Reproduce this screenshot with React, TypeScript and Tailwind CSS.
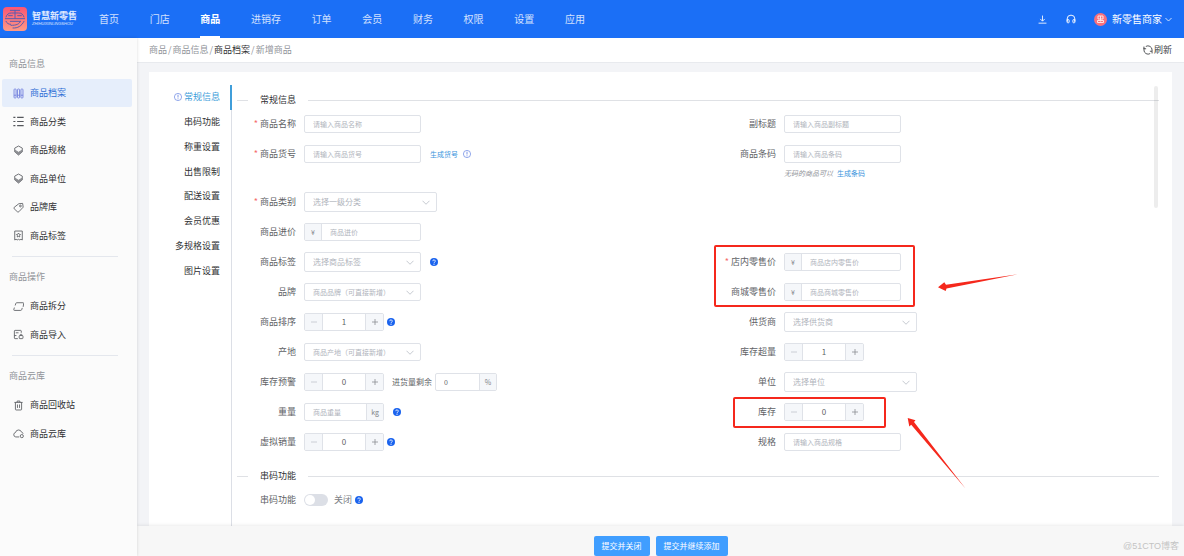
import { useState, type ReactNode } from "react";

const navItems = ["首页", "门店", "商品", "进销存", "订单", "会员", "财务", "权限", "设置", "应用"];

const tabs = ["常规信息", "串码功能", "称重设置", "出售限制", "配送设置", "会员优惠", "多规格设置", "图片设置"];

type IconName = "archive" | "list" | "layers" | "tag" | "badge" | "split" | "import" | "trash" | "cloud";

type MenuItem = { label: string; icon: IconName };

const goodsMenu: MenuItem[] = [
  { label: "商品档案", icon: "archive" },
  { label: "商品分类", icon: "list" },
  { label: "商品规格", icon: "layers" },
  { label: "商品单位", icon: "layers" },
  { label: "品牌库", icon: "tag" },
  { label: "商品标签", icon: "badge" },
];

const actionMenu: MenuItem[] = [
  { label: "商品拆分", icon: "split" },
  { label: "商品导入", icon: "import" },
];

const cloudMenu: MenuItem[] = [
  { label: "商品回收站", icon: "trash" },
  { label: "商品云库", icon: "cloud" },
];

const iconPaths: Record<IconName, ReactNode> = {
  archive: (
    <g stroke="#6a78dc">
      <rect x="1.5" y="1.500" width="3" height="13" rx="1" />
      <rect x="6.500" y="1.500" width="3" height="13" rx="1" />
      <rect x="11.500" y="1.500" width="3" height="13" rx="1" />
      <path d="M1.500 10.500h3M6.500 10.500h3M11.500 10.500h3" />
    </g>
  ),
  list: <path d="M0.500 2h3M6 2h9.500M0.500 8h3M6 8h9.500M0.500 14h3M6 14h9.500" strokeWidth="1.500" />,
  layers: (
    <>
      <path d="M8 1.500 13.500 4.500v5.500L8 14.500 2.500 10V4.500z" />
      <path d="M3 7.500 8 10.500l5-3V10l-5 4-5-4z" fill="#8a8c90" stroke="#8a8c90" />
    </>
  ),
  tag: (
    <>
      <path d="M8.500 2.500 14 2l.8 5.500-6.300 6.700a1.500 1.500 0 0 1-2.100 0L1.700 9.800a1.500 1.500 0 0 1 0-2z" />
      <circle cx="10.800" cy="5.800" r="1.300" />
    </>
  ),
  badge: (
    <>
      <path d="M2.500 1.500h11v13l-2-1-1.500 1-2-1-2 1-1.500-1-2 1z" />
      <path d="m8 4.500 1 1.700 2 .4-1.400 1.500.2 2L8 9.300l-1.800.8.2-2L5 6.600l2-.4z" />
    </>
  ),
  split: (
    <path d="M14.800 8.500l.7-4.800a1 1 0 0 0-1-1.200H5.500a1.500 1.500 0 0 0-1.400 1L3.200 6.500M2 9.500l-.8 3a1 1 0 0 0 1 1.200h9a1.500 1.500 0 0 0 1.400-1l.9-2.700" />
  ),
  import: (
    <>
      <path d="M12 5.500V3a1 1 0 0 0-1-1H3a1 1 0 0 0-1 1v10a1 1 0 0 0 1 1h4M4 5.500h4M2 9.500h3" />
      <rect x="9" y="9.500" width="5.500" height="4.500" rx="1" />
      <path d="M10.500 9.500V8.500a1.300 1.300 0 0 1 2.500 0v1" />
    </>
  ),
  trash: (
    <>
      <path d="M2 3.500h12M6 3.500V1.500h4v2M3.500 3.500v10a1 1 0 0 0 1 1h7a1 1 0 0 0 1-1v-10" />
      <path d="M6.500 6.500v5M9.500 6.500v5" />
    </>
  ),
  cloud: (
    <>
      <path d="M9 13H4a3.300 3.300 0 0 1-.3-6.500 4.500 4.500 0 0 1 8.700-.5 3 3 0 0 1 2.300 2.300" />
      <circle cx="12.800" cy="11.800" r="2.300" />
    </>
  ),
};

function MenuIcon({ name }: { name: IconName }) {
  return (
    <svg className="size-[11px] shrink-0" viewBox="0 0 16 16" fill="none" stroke="#55575c" strokeWidth="1.200" aria-hidden="true">
      {iconPaths[name]}
    </svg>
  );
}

function Logo() {
  return (
    <svg className="size-6 shrink-0" viewBox="0 0 72 72" fill="none" aria-hidden="true">
      <defs>
        <linearGradient id="logo-bg" x1="0" y1="0" x2="0" y2="1">
          <stop offset="0" stopColor="#fb5573" />
          <stop offset="1" stopColor="#fd9a86" />
        </linearGradient>
      </defs>
      <rect width="72" height="72" rx="12" fill="url(#logo-bg)" />
      <g stroke="#5a5cae" strokeWidth="3" strokeLinecap="round">
        <path d="M22 10h28M36 10v24M9 30c2-8 8-12 16-12h22c8 0 14 4 16 12" />
        <path d="M17 26h11M44 26h11M7 35h58" />
        <path d="M9 43c3 6 7 9 14 9M22 43h30M52 43c-3 9-12 12-28 12M30 63c14 1 26-6 33-20" />
      </g>
    </svg>
  );
}

function Chevron({ className = "w-2" }: { className?: string }) {
  return (
    <svg className={`h-[5px] ${className}`} viewBox="0 0 16 10" fill="none" stroke="currentColor" strokeWidth="1.800" aria-hidden="true">
      <path d="m1 1.500 7 7 7-7" />
    </svg>
  );
}

function HelpDot({ className = "ml-[3px]" }: { className?: string }) {
  return (
    <svg className={`size-2 shrink-0 ${className}`} viewBox="0 0 16 16" fill="none" aria-hidden="true">
      <circle cx="8" cy="8" r="8" fill="#1a63ee" />
      <path d="M5.500 6.300a2.500 2.500 0 1 1 3.600 2.200c-.8.400-1.100.8-1.100 1.500" stroke="#fff" strokeWidth="1.700" />
      <circle cx="8" cy="12.300" r="1.100" fill="#fff" />
    </svg>
  );
}

function InfoDot() {
  return (
    <svg className="size-2 shrink-0 text-[#5b7be0]" viewBox="0 0 16 16" fill="none" stroke="currentColor" strokeWidth="1.300" aria-hidden="true">
      <circle cx="8" cy="8" r="7.200" />
      <path d="M8 3.500v5.500M8 10.800v1.700" strokeWidth="1.600" />
    </svg>
  );
}

function MenuGroup({ title, items, active, className }: { title: string; items: MenuItem[]; active?: string; className: string }) {
  return (
    <section>
      <h2 className="px-[9px] text-[#909399]">{title}</h2>
      <ul className={`mt-2 mr-[5px] ml-[2px] grid auto-rows-fr ${className}`}>
        {items.map((item) => (
          <li key={item.label}>
            <a
              href="#"
              className={`flex h-7 items-center gap-[6px] rounded-[2px] px-[11px] ${
                item.label === active ? "bg-[#e6eefb] text-[#2f6fd6]" : "text-[#303133]"
              }`}
            >
              <MenuIcon name={item.icon} />
              {item.label}
            </a>
          </li>
        ))}
      </ul>
    </section>
  );
}

type FieldProps = {
  id: string;
  label: string;
  required?: boolean;
  note?: ReactNode;
  tall?: boolean;
  children: ReactNode;
};

function Field({ id, label, required, note, tall, children }: FieldProps) {
  return (
    <div className={`relative flex items-start ${tall ? "h-12" : "h-[30px]"}`}>
      <label htmlFor={id} className="flex h-[30px] w-[59px] shrink-0 items-center justify-end whitespace-nowrap text-[#606266]">
        {required && <span className="mr-[2px] text-[#f56c6c]">*</span>}
        {label}
      </label>
      <div className="ml-2">
        <div className="flex h-[30px] items-center">{children}</div>
        {note}
      </div>
    </div>
  );
}

function TextInput({ id, placeholder }: { id: string; placeholder: string }) {
  return (
    <input
      id={id}
      type="text"
      placeholder={placeholder}
      className="h-[18px] w-[117px] rounded-[2px] border border-[#dfe2e8] bg-white px-2 text-[7px] text-[#606266] outline-none placeholder:text-[#b0b4bc] focus:border-[#409eff]"
    />
  );
}

function PriceInput({ id, placeholder }: { id: string; placeholder: string }) {
  return (
    <div className="flex h-[18px] w-[117px] overflow-hidden rounded-[2px] border border-[#dfe2e8] bg-white">
      <span className="flex w-[17px] shrink-0 items-center justify-center border-r border-[#dfe2e8] bg-[#f5f7fa] text-[7px] text-[#7d8085]">¥</span>
      <input id={id} type="text" placeholder={placeholder} className="min-w-0 flex-1 px-2 text-[7px] outline-none placeholder:text-[#b0b4bc]" />
    </div>
  );
}

type UnitInputProps = { id: string; unit: string; placeholder?: string; defaultValue?: string; className: string };

function UnitInput({ id, unit, placeholder, defaultValue, className }: UnitInputProps) {
  return (
    <div className={`flex h-[18px] overflow-hidden rounded-[2px] border border-[#dfe2e8] bg-white ${className}`}>
      <input
        id={id}
        type="text"
        placeholder={placeholder}
        defaultValue={defaultValue}
        className="min-w-0 flex-1 px-2 text-[7px] text-[#606266] outline-none placeholder:text-[#b0b4bc]"
      />
      <span className="flex w-[17px] shrink-0 items-center justify-center border-l border-[#dfe2e8] bg-[#f5f7fa] text-[7px] text-[#808388]">{unit}</span>
    </div>
  );
}

const selectSizes = {
  wide: "h-5 w-[133px] text-[8px]",
  normal: "h-5 w-[117px] text-[8px]",
  small: "h-[18px] w-[117px] text-[7px]",
};

function SelectBox({ id, placeholder, size = "wide" }: { id: string; placeholder: string; size?: keyof typeof selectSizes }) {
  return (
    <div className="relative flex items-center">
      <select id={id} className={`appearance-none rounded-[2px] border border-[#dfe2e8] bg-white px-2 text-[#b0b4bc] outline-none ${selectSizes[size]}`}>
        <option>{placeholder}</option>
      </select>
      <Chevron className="pointer-events-none absolute right-[7px] w-2 text-[#c0c4cc]" />
    </div>
  );
}

function Stepper({ id, initial }: { id: string; initial: number }) {
  const [value, setValue] = useState(initial);
  return (
    <div className="flex h-[18px] w-20 overflow-hidden rounded-[2px] border border-[#dfe2e8] bg-white text-[#606266]">
      <button
        type="button"
        aria-label="减少"
        className="flex w-[18px] items-center justify-center border-r border-[#dfe2e8] bg-[#f5f7fa] text-[#c0c4cc]"
        onClick={() => setValue(Math.max(initial, value - 1))}
      >
        <svg className="size-[6px]" viewBox="0 0 12 12" stroke="currentColor" strokeWidth="1.600" aria-hidden="true">
          <path d="M0 6h12" />
        </svg>
      </button>
      <input
        id={id}
        type="text"
        value={value}
        onChange={(event) => setValue(Number(event.target.value) || 0)}
        className="min-w-0 flex-1 text-center text-[8px] outline-none"
      />
      <button
        type="button"
        aria-label="增加"
        className="flex w-[18px] items-center justify-center border-l border-[#dfe2e8] bg-[#f5f7fa] text-[#8a8d93]"
        onClick={() => setValue(value + 1)}
      >
        <svg className="size-[6px]" viewBox="0 0 12 12" stroke="currentColor" strokeWidth="1.600" aria-hidden="true">
          <path d="M0 6h12M6 0v12" />
        </svg>
      </button>
    </div>
  );
}

function SectionTitle({ children }: { children: ReactNode }) {
  return (
    <div className="flex h-[18px] items-center gap-3">
      <span className="h-px w-[11px] bg-[#dfe1e5]" />
      <h3 className="text-[#303133]">{children}</h3>
      <span className="h-px flex-1 bg-[#dfe1e5]" />
    </div>
  );
}

export default function App() {
  const [activeTab, setActiveTab] = useState(tabs[0]);

  return (
    <div className="flex h-screen flex-col overflow-hidden bg-[#f3f4f7] font-['Noto_Sans_CJK_SC','Liberation_Sans',sans-serif] text-[9px] leading-[14px]">
      <header className="flex h-[38px] shrink-0 items-center bg-[#1b6ff6] pr-3 pl-[3px] text-[10px] text-white">
        <Logo />
        <div className="ml-[5px] w-[67px]">
          <div className="text-[9px] leading-[10px] font-bold text-white/85">智慧新零售</div>
          <div className="font-['Liberation_Sans',sans-serif] text-[4px] leading-[6px] text-white/80 italic">ZHIHUIXINLINGSHOU</div>
        </div>
        <nav className="flex h-full w-[486px] justify-between">
          {navItems.map((item) => (
            <a
              key={item}
              href="#"
              className={`flex h-full items-center border-y-2 border-t-transparent ${
                item === "商品" ? "border-b-white font-bold" : "border-b-transparent text-white/80"
              }`}
            >
              {item}
            </a>
          ))}
        </nav>
        <div className="ml-auto flex items-center">
          <button type="button" aria-label="下载">
            <svg className="size-[9px]" viewBox="0 0 16 16" fill="none" stroke="currentColor" strokeWidth="1.500" aria-hidden="true">
              <path d="M8 1v9.500M4 7l4 4 4-4M1 14.500h14" />
            </svg>
          </button>
          <button type="button" aria-label="客服" className="ml-[19px]">
            <svg className="size-[10px]" viewBox="0 0 16 16" fill="none" stroke="currentColor" strokeWidth="1.500" aria-hidden="true">
              <path d="M1.800 12V8a6.200 6.200 0 0 1 12.400 0v4" />
              <path d="M2 9h2a1 1 0 0 1 1 1v3a1 1 0 0 1-1 1H2.800a1 1 0 0 1-1-1zM14 9h-2a1 1 0 0 0-1 1v3a1 1 0 0 0 1 1h1.200a1 1 0 0 0 1-1z" />
            </svg>
          </button>
          <button type="button" className="ml-[18px] flex items-center">
            <svg className="size-[13px]" viewBox="0 0 26 26" fill="none" aria-hidden="true">
              <circle cx="13" cy="13" r="13" fill="#f9707c" />
              <path d="M8 6h10v6H8zM13 6v11M7 15h12v4H7z" stroke="#ffe3e3" strokeWidth="2" />
            </svg>
            <span className="ml-[5px]">新零售商家</span>
            <Chevron className="ml-[3px] w-[7px]" />
          </button>
        </div>
      </header>

      <div className="flex min-h-0 flex-1">
        <aside className="z-10 w-[137px] shrink-0 bg-[#fbfbfb] pt-[19px] shadow-[0_0_3px_rgba(0,0,0,0.15)]">
          <MenuGroup title="商品信息" items={goodsMenu} active="商品档案" className="h-[171px]" />
          <hr className="mt-[6px] mr-[19px] mb-[13px] ml-3 border-[#e4e7ed]" />
          <MenuGroup title="商品操作" items={actionMenu} className="h-[57px]" />
          <hr className="mt-[6px] mr-[19px] mb-[13px] ml-3 border-[#e4e7ed]" />
          <MenuGroup title="商品云库" items={cloudMenu} className="h-[57px]" />
        </aside>

        <main className="flex min-w-0 flex-1 flex-col">
          <div className="flex h-[25px] shrink-0 items-center justify-between border-b border-[#e8eaee] bg-white px-3 text-[#909399]">
            <nav className="flex gap-px">
              <a href="#">商品</a>
              <span>/</span>
              <a href="#">商品信息</a>
              <span>/</span>
              <a href="#" className="text-[#303133]">商品档案</a>
              <span>/</span>
              <span>新增商品</span>
            </nav>
            <button type="button" className="flex items-center gap-px text-[#404246]">
              <svg className="size-[10px]" viewBox="0 0 16 16" fill="none" stroke="currentColor" strokeWidth="1.400" aria-hidden="true">
                <path d="M4.500 2.300A6.600 6.600 0 0 1 14.500 8M1.500 8a6.600 6.600 0 0 0 10 5.700M1.500 8V4.500M14.500 8v2" />
                <path d="M1.500 2.500v3.500H5M14.500 13.500V10H11" />
              </svg>
              刷新
            </button>
          </div>

          <div className="mx-3 mt-[9px] flex min-h-0 flex-1 overflow-hidden bg-white pt-[13px]">
            <div className="w-[83px] shrink-0 border-r border-[#dcdfe6]">
              <div role="tablist" aria-orientation="vertical" className="-mr-px grid h-[198px] auto-rows-fr">
                {tabs.map((tab) => (
                  <button
                    key={tab}
                    type="button"
                    role="tab"
                    aria-selected={tab === activeTab}
                    onClick={() => setActiveTab(tab)}
                    className={`flex items-center justify-end gap-[2px] border-r-2 pr-[10px] ${
                      tab === activeTab ? "border-[#409eda] text-[#409eda]" : "border-transparent text-[#303133]"
                    }`}
                  >
                    {tab === tabs[0] && <InfoDot />}
                    {tab}
                  </button>
                ))}
              </div>
            </div>

            <form className="relative min-w-0 flex-1 pt-[6px] pr-[13px] pl-[5px]" onSubmit={(event) => event.preventDefault()}>
              <div className="absolute top-px right-[14px] h-[122px] w-1 rounded-full bg-black/7" />
              <SectionTitle>常规信息</SectionTitle>
              <div className="grid grid-cols-[12fr_11fr] pr-[2px]">
                <Field id="name" label="商品名称" required>
                  <TextInput id="name" placeholder="请输入商品名称" />
                </Field>
                <Field id="subtitle" label="副标题">
                  <TextInput id="subtitle" placeholder="请输入商品副标题" />
                </Field>

                <Field id="sku" label="商品货号" required tall>
                  <TextInput id="sku" placeholder="请输入商品货号" />
                  <button type="button" className="mr-[5px] ml-[9px] text-[7px] text-[#3a94dc]">生成货号</button>
                  <InfoDot />
                </Field>
                <Field
                  id="barcode"
                  label="商品条码"
                  tall
                  note={
                    <p className="-mt-[3px] flex gap-1 text-[7px] leading-[14px] text-[#909399]">
                      <em>无码的商品可以</em>
                      <a href="#" className="text-[#3a94dc]">生成条码</a>
                    </p>
                  }
                >
                  <TextInput id="barcode" placeholder="请输入商品条码" />
                </Field>

                <Field id="category" label="商品类别" required>
                  <SelectBox id="category" placeholder="选择一级分类" />
                </Field>
                <div />

                <Field id="cost" label="商品进价">
                  <PriceInput id="cost" placeholder="商品进价" />
                </Field>
                <div />

                <Field id="tags" label="商品标签">
                  <SelectBox id="tags" placeholder="选择商品标签" size="normal" />
                  <HelpDot className="ml-[9px]" />
                </Field>
                <Field id="store-price" label="店内零售价" required>
                  <PriceInput id="store-price" placeholder="商品店内零售价" />
                  <div className="pointer-events-none absolute -top-[2px] -left-[3px] z-10 h-[62px] w-[201px] rounded-[2px] border-2 border-[#f5281c]" />
                  <svg className="pointer-events-none absolute top-[23px] left-[221px] h-6 w-[82px]" viewBox="0 0 82 24" fill="#f5281c" aria-hidden="true">
                    <path d="M0 17.300 6.300 12.300 8 14.800 81 4 8.500 18.400 7.700 21z" />
                  </svg>
                </Field>

                <Field id="brand" label="品牌">
                  <SelectBox id="brand" placeholder="商品品牌（可直接新增）" size="small" />
                </Field>
                <Field id="mall-price" label="商城零售价">
                  <PriceInput id="mall-price" placeholder="商品商城零售价" />
                </Field>

                <Field id="sort" label="商品排序">
                  <Stepper id="sort" initial={1} />
                  <HelpDot />
                </Field>
                <Field id="supplier" label="供货商">
                  <SelectBox id="supplier" placeholder="选择供货商" />
                </Field>

                <Field id="origin" label="产地">
                  <SelectBox id="origin" placeholder="商品产地（可直接新增）" size="small" />
                </Field>
                <Field id="over-stock" label="库存超量">
                  <Stepper id="over-stock" initial={1} />
                </Field>

                <Field id="stock-alert" label="库存预警">
                  <Stepper id="stock-alert" initial={0} />
                  <label htmlFor="remain" className="mr-[3px] ml-2 text-[8px] text-[#606266]">进货量剩余</label>
                  <UnitInput id="remain" unit="%" defaultValue="0" className="w-[62px]" />
                </Field>
                <Field id="unit" label="单位">
                  <SelectBox id="unit" placeholder="选择单位" />
                </Field>

                <Field id="weight" label="重量">
                  <UnitInput id="weight" unit="kg" placeholder="商品重量" className="w-20" />
                  <HelpDot className="ml-[9px]" />
                </Field>
                <Field id="stock" label="库存">
                  <Stepper id="stock" initial={0} />
                  <div className="pointer-events-none absolute top-0 left-4 z-10 h-[31px] w-[153px] rounded-[2px] border-2 border-[#f5281c]" />
                  <svg className="pointer-events-none absolute top-5 left-[190px] h-[73px] w-[60px]" viewBox="0 0 60 73" fill="#f5281c" aria-hidden="true">
                    <path d="M.7 1 8.500 3.200 7 5 58.500 71.500 4.200 7.700 2.300 9.500z" />
                  </svg>
                </Field>

                <Field id="virtual-sales" label="虚拟销量">
                  <Stepper id="virtual-sales" initial={0} />
                  <HelpDot />
                </Field>
                <Field id="spec" label="规格">
                  <TextInput id="spec" placeholder="请输入商品规格" />
                </Field>
              </div>

              <div className="mt-[10px]">
                <SectionTitle>串码功能</SectionTitle>
                <Field id="serial" label="串码功能">
                  <input
                    id="serial"
                    type="checkbox"
                    role="switch"
                    className="h-3 w-6 appearance-none rounded-full bg-[#dcdfe6] p-px before:block before:size-[10px] before:rounded-full before:bg-white checked:bg-[#409eff] checked:before:ml-3"
                  />
                  <span className="ml-[6px] text-[#7d8085]">关闭</span>
                  <HelpDot />
                </Field>
              </div>
            </form>
          </div>

          <footer className="relative flex h-[30px] shrink-0 items-end justify-center gap-[6px] bg-[#f7f7f7] shadow-[0_-1px_3px_rgba(0,0,0,0.08)]">
            <button type="button" className="h-5 rounded-[2px] bg-[#409eff] px-2 text-[8px] text-white">提交并关闭</button>
            <button type="button" className="h-5 rounded-[2px] bg-[#409eff] px-2 text-[8px] text-white">提交并继续添加</button>
            <span className="absolute right-[5px] bottom-1 font-['Liberation_Sans','Noto_Sans_CJK_SC',sans-serif] text-[9px] leading-3 text-[#c4c4c4]">@51CTO博客</span>
          </footer>
        </main>
      </div>
    </div>
  );
}
